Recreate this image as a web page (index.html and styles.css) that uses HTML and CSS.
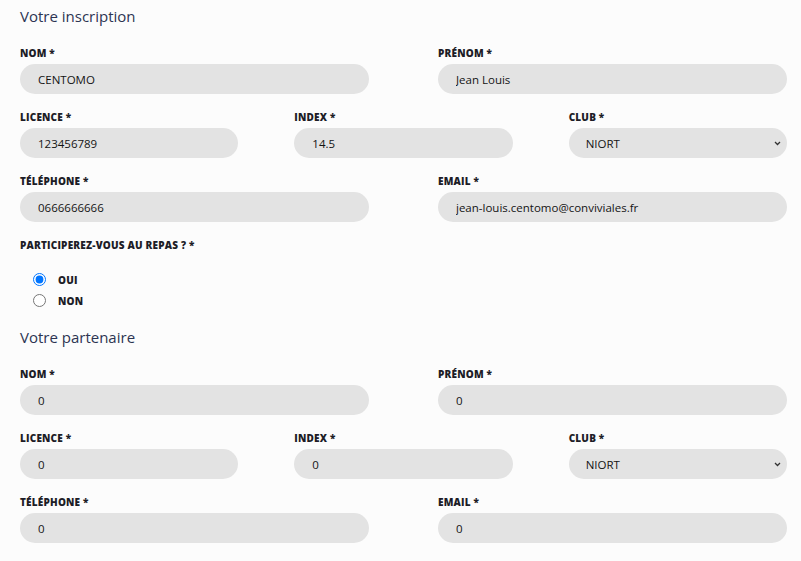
FILE: index.html
```html
<!DOCTYPE html>
<html lang="fr">
<head>
<meta charset="utf-8">
<title>Inscription</title>
<link rel="stylesheet" href="styles.css">
</head>
<body>
<form class="form">
  <section class="section">
    <h2 class="section-title">Votre inscription</h2>
    <div class="row row-2">
      <div class="field"><label class="label">Nom *</label><input class="input" type="text" value="CENTOMO"></div>
      <div class="field"><label class="label">Prénom *</label><input class="input" type="text" value="Jean Louis"></div>
    </div>
    <div class="row row-3">
      <div class="field"><label class="label">Licence *</label><input class="input" type="text" value="123456789"></div>
      <div class="field"><label class="label">Index *</label><input class="input" type="text" value="14.5"></div>
      <div class="field"><label class="label">Club *</label><select class="input select"><option>NIORT</option></select></div>
    </div>
    <div class="row row-2">
      <div class="field"><label class="label">Téléphone *</label><input class="input" type="text" value="0666666666"></div>
      <div class="field"><label class="label">Email *</label><input class="input" type="text" value="jean-louis.centomo@conviviales.fr"></div>
    </div>
    <div class="field radio-field">
      <span class="label">Participerez-vous au repas ? *</span>
      <div class="radios">
        <label class="radio"><input type="radio" name="repas" checked><span>OUI</span></label>
        <label class="radio"><input type="radio" name="repas"><span>NON</span></label>
      </div>
    </div>
  </section>
  <section class="section">
    <h2 class="section-title">Votre partenaire</h2>
    <div class="row row-2">
      <div class="field"><label class="label">Nom *</label><input class="input" type="text" value="0"></div>
      <div class="field"><label class="label">Prénom *</label><input class="input" type="text" value="0"></div>
    </div>
    <div class="row row-3">
      <div class="field"><label class="label">Licence *</label><input class="input" type="text" value="0"></div>
      <div class="field"><label class="label">Index *</label><input class="input" type="text" value="0"></div>
      <div class="field"><label class="label">Club *</label><select class="input select"><option>NIORT</option></select></div>
    </div>
    <div class="row row-2">
      <div class="field"><label class="label">Téléphone *</label><input class="input" type="text" value="0"></div>
      <div class="field"><label class="label">Email *</label><input class="input" type="text" value="0"></div>
    </div>
  </section>
</form>
</body>
</html>
```

FILE: styles.css
```css
* { box-sizing: border-box; }
html, body { margin: 0; padding: 0; }
body {
  background: #fcfcfc;
  font-family: "Open Sans", "Liberation Sans", sans-serif;
  color: #1d1d27;
}
.form {
  padding: 6px 14px 0 20px;
}
.section-title {
  margin: 0 0 19px;
  font-size: 15px;
  line-height: 21px;
  font-weight: 400;
  color: #2c3452;
}
.row {
  display: grid;
  margin-bottom: 16px;
}
.row-2 { grid-template-columns: 1fr 1fr; column-gap: 69px; }
.row-3 { grid-template-columns: 1fr 1fr 1fr; column-gap: 56px; }
.field { display: flex; flex-direction: column; }
.label {
  display: block;
  font-size: 10px;
  line-height: 14px;
  font-weight: 800;
  letter-spacing: 0.2px;
  text-transform: uppercase;
  color: #1d1d27;
  margin-bottom: 4px;
}
.input {
  height: 30px;
  border: none;
  border-radius: 15px;
  background: #e3e3e3;
  padding: 0 0 0 18px;
  font-family: inherit;
  font-size: 11.5px;
  color: #141414;
  outline: none;
  width: 100%;
}
.select {
  -webkit-appearance: none;
  appearance: none;
  padding-left: 17px;
  padding-right: 20px;
  background-image: url("data:image/svg+xml,%3Csvg xmlns='http://www.w3.org/2000/svg' width='7' height='5' viewBox='0 0 7 5'%3E%3Cpath d='M1 1l2.5 2.5L6 1' fill='none' stroke='%23333' stroke-width='1.3'/%3E%3C/svg%3E");
  background-repeat: no-repeat;
  background-position: right 6px center;
}
.radio-field { margin-bottom: 18px; }
.radios {
  display: flex;
  flex-direction: column;
  padding: 15px 0 0 13px;
  gap: 4px;
}
.radio {
  display: flex;
  align-items: center;
  gap: 12px;
  font-size: 10px;
  font-weight: 800;
  letter-spacing: 0.2px;
  height: 17px;
}
.radio input { margin: 0; width: 13px; height: 13px; }
```
